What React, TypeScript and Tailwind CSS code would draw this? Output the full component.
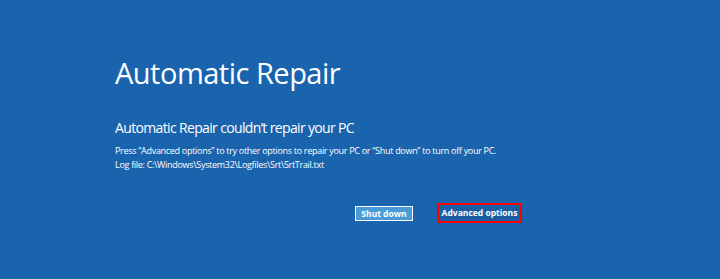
export default function App() {
  return (
    <main className="flex h-[279px] w-[720px] flex-col bg-[#1a64ae] pl-[115px] pt-[52px] text-white [font-family:'Open_Sans',sans-serif]">
      <h1 className="text-[29px] leading-[42px] font-normal tracking-[-0.5px]">Automatic Repair</h1>
      <h2 className="mt-[24px] text-[14px] leading-[20px] tracking-[-0.65px]">Automatic Repair couldn’t repair your PC</h2>
      <p className="mt-[6px] text-[9px] leading-[14px] tracking-[-0.3px]">
        Press “Advanced options” to try other options to repair your PC or “Shut down” to turn off your PC.
      </p>
      <p className="text-[9px] leading-[14px] tracking-[-0.3px]">Log file: C:\Windows\System32\Logfiles\Srt\SrtTrail.txt</p>
      <div className="mt-[31px] flex items-center gap-[24px] pl-[240px]">
        <button className="h-[15px] w-[58px] border border-white bg-[#4a9ad8] text-[8.5px] font-bold leading-[13px] text-white">
          Shut down
        </button>
        <button className="h-[20px] w-[85px] border-2 border-[#ff0000] bg-[#1a5fa6] text-[8.5px] font-bold leading-[16px] text-white">
          Advanced options
        </button>
      </div>
    </main>
  )
}
